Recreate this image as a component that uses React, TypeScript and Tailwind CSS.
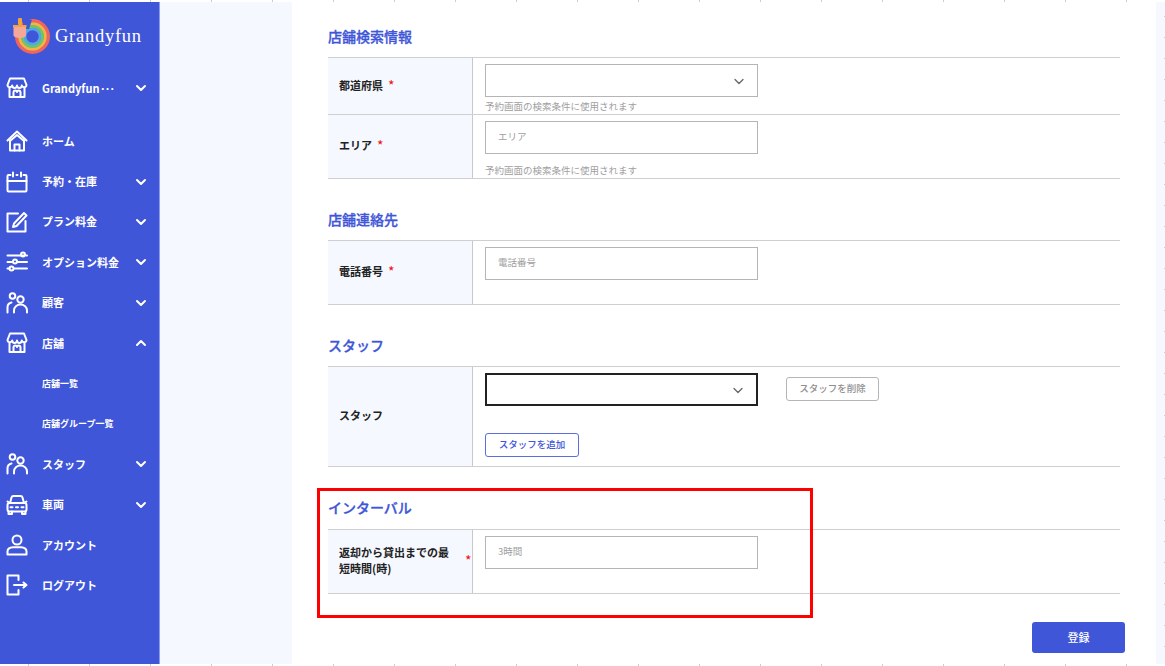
import React from "react";

function Icon({ children }: { children: React.ReactNode }) {
  return (
    <svg width="22" height="22" viewBox="0 0 22 22" fill="none" stroke="white" strokeWidth="2" strokeLinecap="round" strokeLinejoin="round" className="shrink-0">
      {children}
    </svg>
  );
}

const Store = () => (
  <Icon>
    <path d="M4 1.500h14l2.500 6.500a2.400 2.400 0 0 1-4.700.5 2.400 2.400 0 0 1-4.800 0 2.400 2.400 0 0 1-4.800 0A2.400 2.400 0 0 1 1.500 8Z" />
    <path d="M3.500 11v9h15v-9" />
    <path d="M7.500 20v-5a1.800 1.800 0 0 1 3.500 0 1.800 1.800 0 0 1 3.500 0v5" />
  </Icon>
);
const Home = () => (
  <Icon>
    <path d="M1.500 10.500 11 1.500l9.500 9" />
    <path d="M4.500 10.500 11 5l6.500 5.500" />
    <path d="M4 10.500V20.500h14V10.500" />
    <path d="M8.500 20.500v-6h5v6" />
  </Icon>
);
const Calendar = () => (
  <Icon>
    <path d="M4.500 4H2.500a1 1 0 0 0-1 1v14.500a1 1 0 0 0 1 1h17a1 1 0 0 0 1-1V5a1 1 0 0 0-1-1H17.500" />
    <path d="M1.500 10h19" />
    <path d="M7 1.500v4M15 1.500v4M10.500 4h1" />
  </Icon>
);
const Edit = () => (
  <Icon>
    <path d="M19.500 10v10.500h-18V2.500H12" />
    <path d="M18 2 20.500 4.500 10.500 15 7 16 8 12.500Z" />
  </Icon>
);
const Sliders = () => (
  <Icon>
    <path d="M1.500 4.500h17M20.500 4.500h.5M1.500 11h5M11.500 11h9.500M1.500 17.500h2M8 17.500h13" />
    <circle cx="17" cy="3.500" r="2" />
    <circle cx="9" cy="10.500" r="2" />
    <circle cx="5.500" cy="17.500" r="2" />
  </Icon>
);
const People = () => (
  <Icon>
    <circle cx="6.500" cy="4" r="2.800" />
    <circle cx="14.500" cy="7.500" r="3.200" />
    <path d="M1.500 20.500v-5.500a5 5 0 0 1 4-4.500" />
    <path d="M8 20.500v-2a6.500 6 0 0 1 13 0v2" />
  </Icon>
);
const Car = () => (
  <Icon>
    <path d="M4 9 5.500 3.500A2 2 0 0 1 7.500 2h7a2 2 0 0 1 2 1.500L18 9" />
    <path d="M1.500 7.500 4 9h14l2.500-1.500" />
    <rect x="1.500" y="9" width="19" height="8.500" rx="2" />
    <path d="M4.500 13.200h2M10 13.200h2M15.500 13.200h2" />
    <path d="M2.500 17.500v2.500h3.500v-2.500M16 17.500v2.500h3.500v-2.500" />
  </Icon>
);
const User = () => (
  <Icon>
    <circle cx="11" cy="6" r="4.500" />
    <path d="M1.500 20.500v-3c0-3 3-4 5.500-4.200h8c2.500.2 5.500 1.200 5.500 4.200v3Z" />
  </Icon>
);
const Logout = () => (
  <Icon>
    <path d="M12.500 6V1.500h-11v19h11V16" />
    <path d="M8 11h12M17.500 8.500 20.500 11l-3 2.500" />
  </Icon>
);
const Chevron = ({ up }: { up?: boolean }) => (
  <svg width="12" height="8" viewBox="0 0 12 8" fill="none" stroke="white" strokeWidth="2" strokeLinecap="round" strokeLinejoin="round" className="absolute left-[135px] top-1/2 -translate-y-1/2">
    <path d={up ? "M2 6l4-4 4 4" : "M2 2l4 4 4-4"} />
  </svg>
);

function Nav({ icon, label, chevron, up, h = "h-[40.400px]" }: { icon: React.ReactNode; label: React.ReactNode; chevron?: boolean; up?: boolean; h?: string }) {
  return (
    <div className={`relative flex items-center pl-[6px] ${h}`}>
      {icon}
      <span className="ml-[14px] text-[11px] font-bold text-white leading-none whitespace-nowrap">{label}</span>
      {chevron && <Chevron up={up} />}
    </div>
  );
}

function Sub({ label }: { label: string }) {
  return <div className="h-[40.400px] flex items-center pl-[42px] text-[9px] font-bold text-white leading-none">{label}</div>;
}

function Logo() {
  return (
    <svg width="38" height="38" viewBox="0 0 38 38" className="shrink-0">
      <g fill="none">
        <circle cx="19.500" cy="19.500" r="15.800" stroke="#f0645f" strokeWidth="3.400" />
        <circle cx="19.500" cy="19.500" r="12.700" stroke="#f5b342" strokeWidth="3.200" />
        <circle cx="19.500" cy="19.500" r="10" stroke="#6fc36b" strokeWidth="3" />
        <circle cx="19.500" cy="19.500" r="7.500" stroke="#4fa8e8" strokeWidth="2.600" />
      </g>
      <path d="M10 0 19 3 16 12 10 12Z" fill="#4056d8" />
      <rect x="5" y="1" width="4" height="7" rx="1" fill="#f2a33c" />
      <rect x="0" y="8" width="13.500" height="2.200" fill="#f2a33c" />
      <path d="M.5 10h12.500v8c0 2-2 3-6 3s-6.500-1-6.500-3Z" fill="#f5a89a" />
    </svg>
  );
}

function Sidebar() {
  return (
    <aside className="w-[160px] shrink-0 bg-[#4056d8] border-r border-[#8a9bf0] flex flex-col">
      <div className="h-[52px] flex items-center pl-[13px] pt-[16px]">
        <Logo />
        <span className="ml-[4px] text-[18.500px] leading-none text-white tracking-[0.040em]" style={{ fontFamily: '"Liberation Serif", serif' }}>Grandyfun</span>
      </div>
      <div className="h-[40px] mt-[14px]">
        <Nav icon={<Store />} label={<>Grandyfun<span className="tracking-[-0.160em]">···</span></>} chevron h="h-[40px]" />
      </div>
      <div className="mt-[13px]">
        <Nav icon={<Home />} label="ホーム" />
        <Nav icon={<Calendar />} label="予約・在庫" chevron />
        <Nav icon={<Edit />} label="プラン料金" chevron />
        <Nav icon={<Sliders />} label="オプション料金" chevron />
        <Nav icon={<People />} label="顧客" chevron />
        <Nav icon={<Store />} label="店舗" chevron up />
        <Sub label="店舗一覧" />
        <Sub label="店舗グループ一覧" />
        <Nav icon={<People />} label="スタッフ" chevron />
        <Nav icon={<Car />} label="車両" chevron />
        <Nav icon={<User />} label="アカウント" />
        <Nav icon={<Logout />} label="ログアウト" />
      </div>
    </aside>
  );
}

function Heading({ children, className }: { children: React.ReactNode; className: string }) {
  return <h2 className={`text-[14px] font-medium [-webkit-text-stroke:0.300px_#4056d8] text-[#4056d8] leading-none ${className}`}>{children}</h2>;
}

function Row({ label, h, star, children, topBorder }: { label: React.ReactNode; h: string; star?: React.ReactNode; children: React.ReactNode; topBorder?: boolean }) {
  return (
    <div className={`flex border-b border-[#cfcfcf] ${topBorder ? "border-t" : ""} ${h}`}>
      <div className="w-[145px] shrink-0 bg-[#f5f8ff] border-r border-[#c8c8c8] flex items-center pl-[11px] pb-[3px] relative text-[11px] font-bold text-[#222] leading-[16px]">
        {label}
        {star}
      </div>
      <div className="flex-1 relative pl-[12px] min-w-0">{children}</div>
    </div>
  );
}

const Star = () => <span className="text-[#f01010] ml-[5px] text-[14px] font-normal">*</span>;

function Field({ placeholder, select, dark }: { placeholder?: string; select?: boolean; dark?: boolean }) {
  return (
    <div className={`w-[273px] h-[33px] bg-white flex items-center justify-between pl-[12px] pr-[12px] pb-[2px] ${dark ? "border-2 border-[#222]" : "border border-[#b5b5b5]"}`}>
      <span className="text-[9.500px] text-[#a0a0a0] leading-none">{placeholder}</span>
      {select && (
        <svg width="12" height="8" viewBox="0 0 12 8" fill="none" stroke="#666" strokeWidth="1.300" strokeLinecap="round" strokeLinejoin="round" className="mt-[5px]">
          <path d="M2 1.500 6 5.500l4-4" />
        </svg>
      )}
    </div>
  );
}

const Hint = ({ className }: { className: string }) => (
  <p className={`text-[9.500px] text-[#a0a0a0] leading-none ${className}`}>予約画面の検索条件に使用されます</p>
);

function Main() {
  return (
    <main className="flex-1 bg-white pl-[36px] pr-[36px] min-w-0">
      <Heading className="mt-[27px]">店舗検索情報</Heading>
      <div className="mt-[14px]">
        <Row topBorder h="h-[58px]" label="都道府県" star={<Star />}>
          <div className="pt-[6px]"><Field select /></div>
          <Hint className="mt-[5px]" />
        </Row>
        <Row h="h-[64px]" label="エリア" star={<Star />}>
          <div className="pt-[6px]"><Field placeholder="エリア" /></div>
          <Hint className="mt-[12px]" />
        </Row>
      </div>
      <Heading className="mt-[33px]">店舗連絡先</Heading>
      <div className="mt-[14px]">
        <Row topBorder h="h-[65px]" label="電話番号" star={<Star />}>
          <div className="pt-[6px]"><Field placeholder="電話番号" /></div>
        </Row>
      </div>
      <Heading className="mt-[33px]">スタッフ</Heading>
      <div className="mt-[14px]">
        <Row topBorder h="h-[101px]" label="スタッフ">
          <div className="pt-[6px] flex items-start">
            <Field select dark />
            <button className="ml-[28px] mt-[4px] w-[93px] h-[24px] rounded-[3px] border border-[#b5b5b5] text-[9.500px] font-medium text-[#8f8f8f] bg-white leading-none">スタッフを削除</button>
          </div>
          <button className="mt-[27px] w-[94px] h-[24px] rounded-[3px] border border-[#5a6ee0] text-[9.500px] font-medium text-[#4056d8] bg-white leading-none block">スタッフを追加</button>
        </Row>
      </div>
      <Heading className="mt-[33px]">インターバル</Heading>
      <div className="mt-[15px]">
        <Row topBorder h="h-[65px]" label={<span className="w-[115px]">返却から貸出までの最短時間(時)</span>} star={<span className="absolute left-[137px] top-[20px] text-[#f01010] text-[14px] font-normal leading-[1.500]">*</span>}>
          <div className="pt-[6px]"><Field placeholder="3時間" /></div>
        </Row>
      </div>
      <div className="flex justify-end mt-[28px] -mr-[5px]">
        <button className="w-[93px] h-[31px] rounded-[3px] bg-[#4056d8] text-white text-[11px] font-medium leading-none">登録</button>
      </div>
    </main>
  );
}

const tickClass = "h-[2px] bg-white bg-[repeating-linear-gradient(90deg,transparent_0,transparent_28px,#cccccc_28px,#cccccc_29px,transparent_29px,transparent_61px)]";

export default function App() {
  return (
    <div className="w-[1165px] h-[666px] bg-white overflow-hidden relative" style={{ fontFamily: '"Noto Sans CJK JP", "Noto Sans", sans-serif' }}>
      <div className={tickClass} />
      <div className="flex h-[662px]">
        <Sidebar />
        <div className="w-[132px] shrink-0 bg-[#f5f8ff]" />
        <Main />
        <div className="w-[9px] shrink-0 bg-[#f5f8ff] bg-[repeating-linear-gradient(180deg,transparent_0,transparent_14px,#cccccc_14px,#cccccc_15px,transparent_15px,transparent_21px)] bg-[length:1px_100%] bg-right bg-no-repeat" />
      </div>
      <div className={tickClass} />
      <div className="absolute left-[317px] top-[488px] w-[496px] h-[130px] border-[3px] border-[#ff0000] pointer-events-none" />
    </div>
  );
}
